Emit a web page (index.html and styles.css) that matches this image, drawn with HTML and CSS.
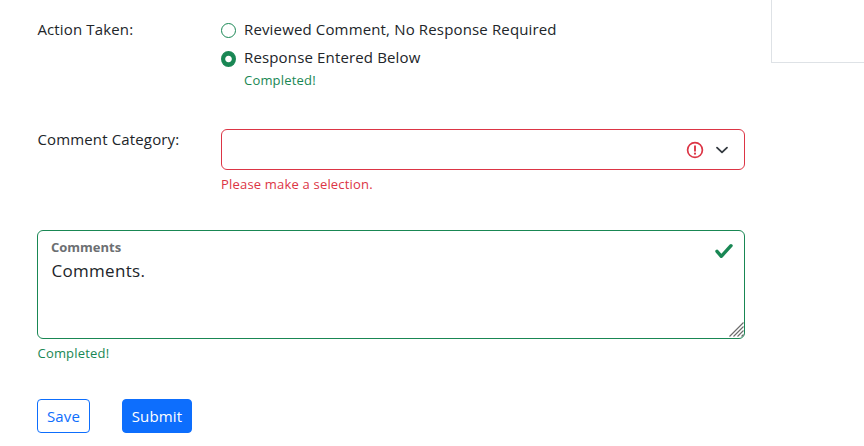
FILE: index.html
```html
<!DOCTYPE html>
<html lang="en">
<head>
    <meta charset="UTF-8">
    <title>Comment Response</title>
    <meta name="viewport" content="width=device-width,initial-scale=1">
    <link rel="stylesheet" href="styles.css">
</head>
<body>
    <div class="page">
        <form class="response-form">
            <div class="form-row action-row">
                <div class="form-label">Action Taken:</div>
                <div class="form-field">
                    <div class="form-check">
                        <input class="form-check-input" type="radio" name="action" id="reviewed">
                        <label for="reviewed">Reviewed Comment, No Response Required</label>
                    </div>
                    <div class="form-check">
                        <input class="form-check-input" type="radio" name="action" id="entered" checked>
                        <label for="entered">Response Entered Below</label>
                    </div>
                    <div class="feedback valid check-feedback">Completed!</div>
                </div>
            </div>

            <div class="form-row category-row">
                <label class="form-label" for="category">Comment Category:</label>
                <div class="form-field">
                    <div class="select-box">
                        <select class="form-select" id="category">
                            <option value=""></option>
                        </select>
                        <svg class="alert-icon" width="18" height="18" viewBox="0 0 18 18" fill="none" stroke="#dc3545">
                            <circle cx="9" cy="9" r="7.4" stroke-width="1.7"/>
                            <path stroke-width="1.9" stroke-linecap="round" d="M9 5.2v4.6"/>
                            <circle cx="9" cy="12.7" r="1.1" fill="#dc3545" stroke="none"/>
                        </svg>
                        <svg class="arrow-icon" width="14" height="14" viewBox="0 0 14 14">
                            <path fill="none" stroke="#343a40" stroke-linecap="round" stroke-linejoin="round" stroke-width="1.8" d="M2 4.6l5 4.8 5-4.8"/>
                        </svg>
                    </div>
                    <div class="feedback invalid">Please make a selection.</div>
                </div>
            </div>

            <div class="comment-box">
                <textarea class="form-textarea" id="comments">Comments.</textarea>
                <label class="floating-label" for="comments">Comments</label>
                <svg class="check-icon" width="20" height="20" viewBox="0 0 20 20">
                    <path fill="none" stroke="#198754" stroke-width="3.4" stroke-linecap="round" stroke-linejoin="round" d="M3 10.3l4.3 5L17 4.7"/>
                </svg>
                <svg class="grip-icon" width="15" height="15" viewBox="0 0 15 15">
                    <path fill="none" stroke="#6c6c6c" stroke-width="1.2" d="M.5 14.5l14-14M4.5 14.5l10-10M8.5 14.5l6-6M12.5 14.5l2-2"/>
                </svg>
            </div>
            <div class="feedback valid">Completed!</div>

            <div class="buttons">
                <button type="button" class="btn btn-outline">Save</button>
                <button type="button" class="btn btn-primary">Submit</button>
            </div>
        </form>
        <div class="side-panel"></div>
    </div>
</body>
</html>
```
FILE: styles.css
```css
* {box-sizing:border-box;}
body {margin:0;background:#fff;color:#212529;font-family:"Open Sans", "Noto Sans", sans-serif;font-size:15px;line-height:23px;letter-spacing:.15px;overflow:hidden;}

.page {display:flex;align-items:flex-start;height:446px;}
.response-form {width:708px;margin-left:37px;padding-top:18px;}
.side-panel {flex:1;height:63px;margin-left:26px;border:solid #dee2e6;border-width:0 0 1px 1px;}

.form-row {display:flex;}
.form-label {width:184px;padding-left:.4px;}
.form-field {flex:1;}
.action-row {height:111px;}
.category-row {height:101px;}
.category-row .form-label {line-height:21px;}

.form-check {display:flex;height:28px;}
.form-check-input {appearance:none;flex:none;width:15px;height:15px;margin:5px 8px 0 0;border:1px solid #198754;border-radius:50%;background:#fff;}
.form-check-input:checked {height:16px;background:radial-gradient(circle, #fff 2.8px, #198754 3.7px);}

.feedback {margin-top:4px;font-size:13px;line-height:20px;letter-spacing:.19px;}
.feedback.valid {color:#198754;}
.feedback.invalid {color:#dc3545;}
.comment-box + .feedback {padding-left:.5px;}
.check-feedback {margin:-4px 0 0 23px;}

.select-box, .comment-box {position:relative;}
.form-select {display:block;appearance:none;width:100%;height:41px;border:1px solid #dc3545;border-radius:6px;background:#fff;}
.alert-icon {position:absolute;top:12px;right:41px;}
.arrow-icon {position:absolute;top:14px;right:16px;}

.form-textarea {display:block;width:100%;height:109px;padding:28px 14px 8px 13.5px;border:1px solid #198754;border-radius:6px;background:#fff;color:#212529;font:17px/24px "Open Sans", "Noto Sans", sans-serif;letter-spacing:.3px;resize:none;}
.floating-label {position:absolute;top:8px;left:14px;color:#6c6f72;font-size:13px;font-weight:700;line-height:18px;letter-spacing:0;}
.check-icon {position:absolute;top:11px;right:11px;}
.grip-icon {position:absolute;right:1px;bottom:2px;}

.buttons {display:flex;gap:32px;margin-top:36px;}
.btn {height:34px;padding:0;border:1px solid #0d6efd;border-radius:4px;font:15px/22px "Open Sans", "Noto Sans", sans-serif;letter-spacing:.15px;}
.btn-outline {width:53px;background:#fff;color:#0d6efd;}
.btn-primary {width:70px;background:#0d6efd;color:#fff;}
```
